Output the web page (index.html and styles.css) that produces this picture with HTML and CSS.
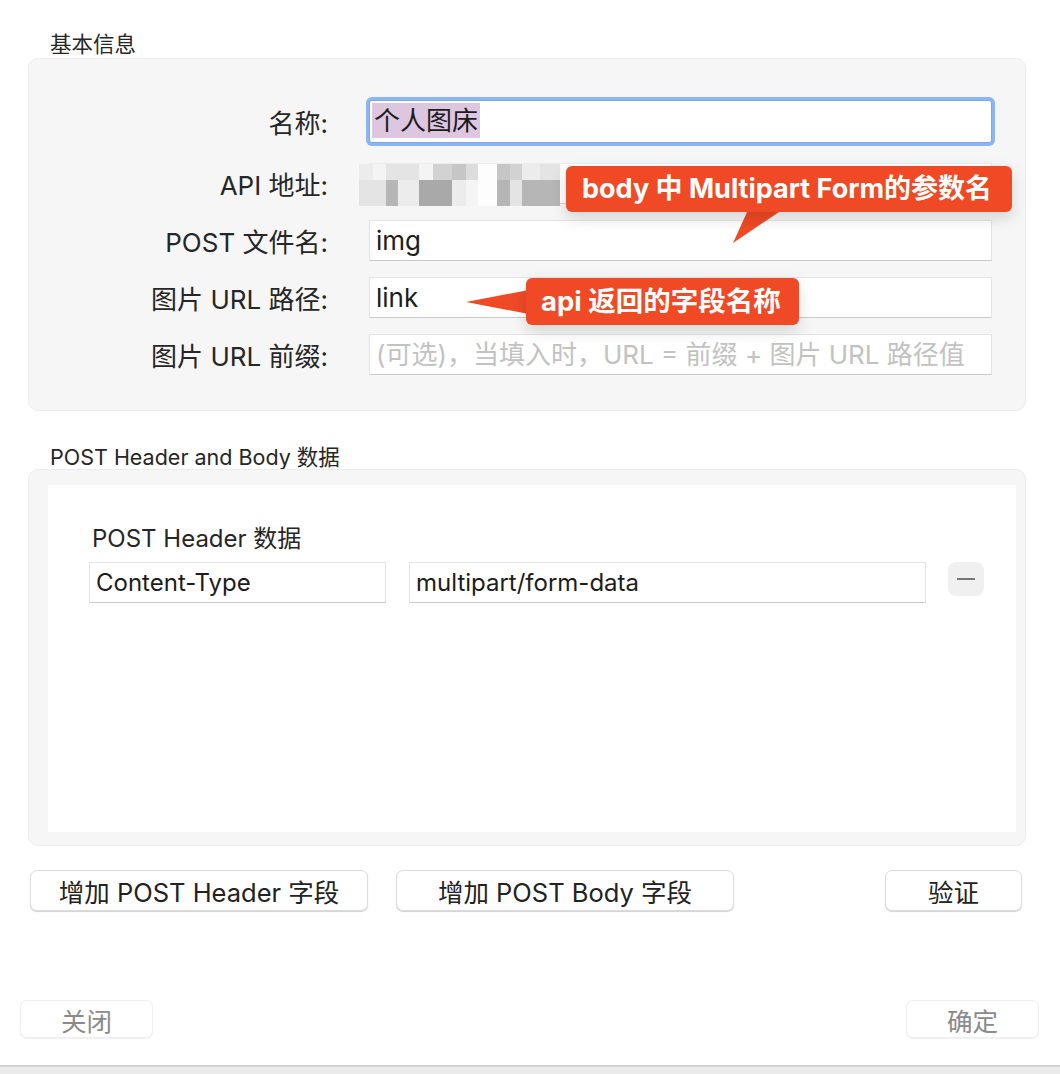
FILE: index.html
```html
<!DOCTYPE html>
<html lang="zh-CN">
<head>
    <meta charset="UTF-8">
    <title>图床设置</title>
    <link rel="stylesheet" href="styles.css">
</head>
<body>
<div class="sheet">
    <div class="section-title first">基本信息</div>
    <div class="group basic">
        <div class="row first-row">
            <label class="label">名称:</label>
            <div class="field focused"><span class="selected">个人图床</span></div>
        </div>
        <div class="row">
            <label class="label">API 地址:</label>
            <div class="field api">
                <div class="mosaic">
                    <div class="col w14"><i class="s2"></i><i class="s3"></i></div>
                    <div class="col w13"><i class="s1"></i><i class="s3"></i></div>
                    <div class="col w12"><i class="s3"></i><i class="s7"></i></div>
                    <div class="col w21"><i class="s3"></i><i class="s2"></i></div>
                    <div class="col w14"><i class="s1"></i><i class="s8"></i></div>
                    <div class="col w19"><i class="s5"></i><i class="s8"></i></div>
                    <div class="col w14"><i class="s6"></i><i class="s2"></i></div>
                    <div class="col w12"><i class="s4"></i><i class="s1"></i></div>
                    <div class="col w19"><i class="s0"></i><i class="s0"></i></div>
                    <div class="col w13"><i class="s6"></i><i class="s7"></i></div>
                    <div class="col w12"><i class="s5"></i><i class="s3"></i></div>
                    <div class="col w18"><i class="s2"></i><i class="s7"></i></div>
                    <div class="col w20"><i class="s3"></i><i class="s7"></i></div>
                </div>
            </div>
        </div>
        <div class="row">
            <label class="label">POST 文件名:</label>
            <div class="field">img</div>
        </div>
        <div class="row">
            <label class="label">图片 URL 路径:</label>
            <div class="field">link</div>
        </div>
        <div class="row">
            <label class="label">图片 URL 前缀:</label>
            <div class="field placeholder">(可选)，当填入时，URL = 前缀 + 图片 URL 路径值</div>
        </div>
    </div>

    <div class="section-title second">POST Header and Body 数据</div>
    <div class="group data">
        <div class="panel">
            <div class="panel-title">POST Header 数据</div>
            <div class="header-row">
                <div class="field key">Content-Type</div>
                <div class="field value">multipart/form-data</div>
                <button class="minus"><span></span></button>
            </div>
        </div>
    </div>

    <div class="actions">
        <button class="btn add-header">增加 POST Header 字段</button>
        <button class="btn add-body">增加 POST Body 字段</button>
        <button class="btn verify">验证</button>
    </div>

    <div class="footer">
        <button class="btn dim">关闭</button>
        <button class="btn dim">确定</button>
    </div>

    <div class="statusbar"></div>

    <div class="callout callout-body">
        <svg class="tail" width="230" height="80" viewBox="0 0 230 80"><polygon points="182,44 216,44 167,77" fill="#ef4a25"/></svg>
        <div class="bubble">body 中 Multipart Form的参数名</div>
    </div>
    <div class="callout callout-api">
        <svg class="tail" width="64" height="48" viewBox="0 0 64 48"><polygon points="63,12 63,36 0,24" fill="#ef4a25"/></svg>
        <div class="bubble">api 返回的字段名称</div>
    </div>
</div>
</body>
</html>
```

FILE: styles.css
```css
body {
    margin: 0;
    background: #fff;
    font-family: Inter, "Noto Sans CJK SC", sans-serif;
    color: #242424;
}

.sheet {
    position: relative;
    width: 1060px;
    height: 1074px;
    overflow: hidden;
    display: flex;
    flex-direction: column;
}

.section-title {
    font-size: 21.5px;
    line-height: 24px;
    height: 24px;
    padding-left: 50px;
    color: #262626;
}

.section-title.first {
    margin-top: 32px;
    margin-bottom: 2px;
}

.section-title.second {
    margin-top: 34px;
    margin-bottom: 0;
}

.group {
    margin-left: 28px;
    width: 998px;
    box-sizing: border-box;
    background: #f6f6f6;
    border: 1px solid #ececec;
    border-radius: 10px;
}

.group.basic {
    height: 353px;
    padding: 41px 33px 0 0;
    display: flex;
    flex-direction: column;
    gap: 15px;
}

.row {
    display: flex;
    align-items: center;
    height: 42px;
}

.row.first-row {
    margin-bottom: 5px;
}

.label {
    width: 299px;
    text-align: right;
    font-size: 26px;
    color: #262626;
    margin-right: 41px;
}

.field {
    position: relative;
    flex: 1;
    height: 41px;
    box-sizing: border-box;
    background: #fff;
    border: 1px solid #e4e4e4;
    border-bottom-color: #c9c9c9;
    font-size: 26px;
    line-height: 39px;
    padding-left: 6px;
    color: #1c1c1c;
    white-space: nowrap;
}

.field.focused {
    border: 1px solid #7aa7ee;
    box-shadow: 0 0 0 3px #8cb5f3;
    border-radius: 3px;
    padding-left: 2px;
    line-height: 37px;
    height: 43px;
    padding-top: 1px;
}

.selected {
    background: #dcc6e0;
    display: inline-block;
    line-height: 35px;
    padding: 0 2px;
}

.field.placeholder {
    color: #c2c2c2;
}

.field.api {
    border-color: #ececec;
    border-bottom-color: #d4d4d4;
}

.mosaic {
    position: absolute;
    left: -11px;
    top: 0;
    display: flex;
}

.mosaic .col {
    display: flex;
    flex-direction: column;
}

.mosaic i {
    display: block;
    height: 16px;
}

.mosaic i + i {
    height: 26px;
}

.w12 { width: 12px; }
.w13 { width: 13px; }
.w14 { width: 14px; }
.w18 { width: 18px; }
.w19 { width: 19px; }
.w20 { width: 20px; }
.w21 { width: 21px; }

.s0 { background: #fdfdfd; }
.s1 { background: #f4f4f4; }
.s2 { background: #ececec; }
.s3 { background: #e4e4e4; }
.s4 { background: #dcdcdc; }
.s5 { background: #d2d2d2; }
.s6 { background: #c6c6c6; }
.s7 { background: #b6b6b6; }
.s8 { background: #a9a9a9; }

.group.data {
    height: 377px;
    padding: 15px 9px 13px 19px;
}

.panel {
    background: #fff;
    height: 100%;
    padding: 40px 0 0 41px;
    box-sizing: border-box;
}

.panel-title {
    font-size: 24px;
    line-height: 28px;
    padding-left: 3px;
    margin-bottom: 9px;
    color: #262626;
}

.header-row {
    display: flex;
    align-items: center;
}

.field.key {
    flex: none;
    width: 297px;
    font-size: 24px;
}

.field.value {
    flex: none;
    width: 517px;
    margin-left: 23px;
    font-size: 24px;
}

.minus {
    margin-left: 22px;
    width: 36px;
    height: 34px;
    border: none;
    border-radius: 8px;
    background: #f0f0f0;
    display: flex;
    align-items: center;
    justify-content: center;
    padding: 0;
    margin-top: -8px;
}

.minus span {
    display: block;
    width: 18px;
    height: 2px;
    background: #777;
}

.btn {
    font-family: inherit;
    font-size: 25.5px;
    color: #222;
    background: #fff;
    border: 1px solid #dcdcdc;
    border-radius: 7px;
    box-shadow: 0 1px 1px rgba(0, 0, 0, 0.18);
    height: 41px;
    padding: 0;
}

.actions {
    display: flex;
    margin-top: 24px;
    padding-left: 30px;
}

.add-header {
    width: 338px;
}

.add-body {
    width: 338px;
    margin-left: 28px;
}

.verify {
    width: 137px;
    margin-left: 151px;
}

.footer {
    display: flex;
    justify-content: space-between;
    margin-top: 89px;
    padding: 0 21px 0 20px;
}

.btn.dim {
    width: 133px;
    height: 38px;
    color: #8a8a8a;
    border-color: #efefef;
    box-shadow: 0 1px 1px rgba(0, 0, 0, 0.06);
}

.statusbar {
    margin-top: 27px;
    flex: 1;
    background: #ebebeb;
    border-top: 2px solid #d2d2d2;
}

.callout {
    position: absolute;
}

.callout-body {
    left: 566px;
    top: 166px;
}

.callout-api {
    left: 526px;
    top: 278px;
}

.callout .tail {
    position: absolute;
    top: 0;
    left: 0;
}

.callout-api .tail {
    left: -60px;
}

.bubble {
    position: relative;
    background: #ef4a25;
    color: #fff;
    font-weight: 700;
    font-size: 27px;
    line-height: 46px;
    height: 46px;
    border-radius: 6px;
    padding: 0 16px;
    white-space: nowrap;
    box-shadow: 0 6px 16px rgba(0, 0, 0, 0.14);
}

.callout-body .bubble {
    width: 446px;
    box-sizing: border-box;
}

.callout-api .bubble {
    width: 273px;
    height: 47px;
    box-sizing: border-box;
    padding: 0 15px;
    font-size: 27.5px;
}
```
